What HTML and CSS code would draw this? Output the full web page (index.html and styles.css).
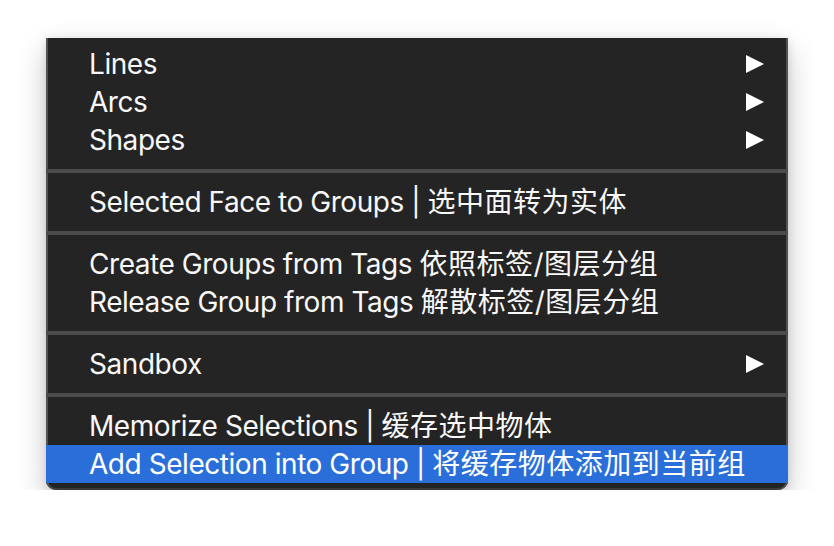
FILE: index.html
```html
<!DOCTYPE html>
<html>
<head>
<meta charset="utf-8">
<link rel="stylesheet" href="styles.css">
</head>
<body>
<div class="menu">
  <div class="item"><span>Lines</span><span class="arrow"></span></div>
  <div class="item"><span>Arcs</span><span class="arrow"></span></div>
  <div class="item"><span>Shapes</span><span class="arrow"></span></div>
  <div class="sep"></div>
  <div class="item"><span>Selected Face to Groups | <span class="zh">选中面转为实体</span></span></div>
  <div class="sep"></div>
  <div class="item"><span>Create Groups from Tags <span class="zh">依照标签/图层分组</span></span></div>
  <div class="item"><span>Release Group from Tags <span class="zh">解散标签/图层分组</span></span></div>
  <div class="sep"></div>
  <div class="item"><span>Sandbox</span><span class="arrow"></span></div>
  <div class="sep"></div>
  <div class="item"><span>Memorize Selections | <span class="zh">缓存选中物体</span></span></div>
  <div class="item active"><span>Add Selection into Group | <span class="zh">将缓存物体添加到当前组</span></span></div>
</div>
</body>
</html>
```
FILE: styles.css
```css
html, body {
  margin: 0;
  padding: 0;
  background: #ffffff;
}
body {
  padding: 38px 46px 0 46px;
  font-family: Inter, "Noto Sans CJK SC", sans-serif;
}
.menu {
  width: 742px;
  background: #242424;
  padding: 7px 0;
  border-radius: 0 0 10px 10px;
  box-shadow: inset 2px 0 #525252, inset -2px 0 #525252, inset 0 -2px #3a3a3a, 0 12px 30px rgba(0,0,0,0.22), 0 2px 8px rgba(0,0,0,0.12);
  color: #f8f8f8;
}
.item {
  height: 38px;
  display: flex;
  align-items: center;
  justify-content: space-between;
  padding: 0 24px 0 43px;
  font-size: 28px;
  letter-spacing: -0.45px;
  line-height: 38px;
}
.zh {
  letter-spacing: 0.5px;
}
.item.active {
  background: #2a6fd9;
  color: #ffffff;
}
.arrow {
  width: 0;
  height: 0;
  border-top: 9px solid transparent;
  border-bottom: 9px solid transparent;
  border-left: 18px solid #ffffff;
}
.sep {
  height: 24px;
  display: flex;
  align-items: center;
}
.sep::before {
  content: "";
  display: block;
  width: 100%;
  height: 4px;
  background: #4b4b4b;
}
```
